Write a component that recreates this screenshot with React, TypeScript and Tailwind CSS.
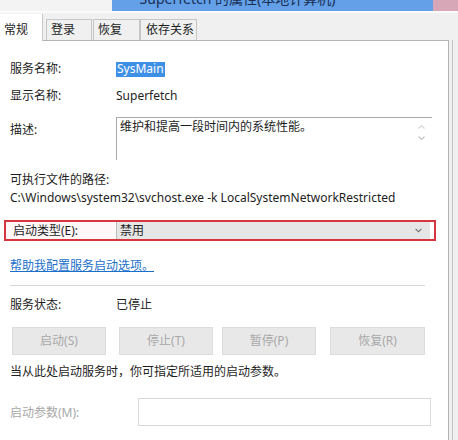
import React from "react";

const font = { fontFamily: '"Segoe UI", "Noto Sans", "Noto Sans CJK SC", sans-serif' };

function Btn({ label, w }: { label: string; w: string }) {
  return (
    <div className={`${w} h-[28px] flex items-center justify-center bg-[#e8e8e8] border border-[#dcdcdc] text-[#a8a8a8] text-[12px]`}>
      {label}
    </div>
  );
}

export default function App() {
  return (
    <div className="w-[458px] h-[440px] overflow-hidden bg-[#f0f0f0] text-[#1e1e1e] text-[12px] flex flex-col" style={font}>
      {/* title bar (cropped) */}
      <div className="h-[11px] flex shrink-0">
        <div className="w-[112px] bg-[#f3f3f3]" />
        <div className="flex-1 bg-[#63a0e8] overflow-hidden flex justify-center">
          <div className="text-[14px] leading-[14px] -mt-[8px] text-[#1a2f55] pr-[70px]">Superfetch 的属性(本地计算机)</div>
        </div>
        <div className="w-[25px] bg-[#d7a7b8]" />
      </div>
      <div className="h-[2px] bg-[#fbfbfb] shrink-0" />
      {/* tabs */}
      <div className="h-[27px] flex items-end shrink-0 relative z-10">
        <div className="w-[43px] h-[27px] bg-white border-r border-[#c9c9c9] -mb-px flex items-start pt-[7px] pl-[4px] text-[12px]">常规</div>
        <div className="ml-[3px] w-[46px] h-[21px] bg-[#f0f0f0] border border-b-0 border-[#c6c6c6] flex items-center pl-[4px]">登录</div>
        <div className="ml-px w-[47px] h-[21px] bg-[#f0f0f0] border border-b-0 border-[#c6c6c6] flex items-center pl-[4px]">恢复</div>
        <div className="w-[57px] h-[21px] bg-[#f0f0f0] border border-b-0 border-[#c6c6c6] flex items-center pl-[5px]">依存关系</div>
      </div>
      {/* panel */}
      <div className="flex-1 flex">
        <div className="w-[449px] bg-white border-t border-r border-[#b4b4b4] flex flex-col">
          <div className="h-[20px]" />
          <div className="h-[16px] flex items-center">
            <div className="w-[116px] pl-[10px]">服务名称:</div>
            <div className="bg-[#3e8fe6] text-white px-[1px] h-[15px] flex items-center">SysMain</div>
          </div>
          <div className="h-[11px]" />
          <div className="h-[16px] flex items-center">
            <div className="w-[116px] pl-[10px]">显示名称:</div>
            <div>Superfetch</div>
          </div>
          <div className="h-[13px]" />
          <div className="h-[43px] flex">
            <div className="w-[116px] pl-[10px] pt-[4px]">描述:</div>
            <div className="w-[316px] border-t border-l border-[#a9a9a9] flex">
              <div className="flex-1 pl-[3px] pt-[1px] leading-[16px]">维护和提高一段时间内的系统性能。</div>
              <div className="w-[14px] mr-[4px] flex flex-col items-center pt-[6px] gap-[7px]">
                <svg width="7" height="5" viewBox="0 0 7 5"><path d="M0.5 4.5 L3.5 1.5 L6.5 4.5" fill="none" stroke="#d4d4d4" strokeWidth="1.2" /></svg>
                <svg width="7" height="5" viewBox="0 0 7 5"><path d="M0.5 0.5 L3.5 3.5 L6.5 0.5" fill="none" stroke="#c4c4c4" strokeWidth="1.2" /></svg>
              </div>
            </div>
          </div>
          <div className="h-[12px]" />
          <div className="h-[16px] flex items-center pl-[10px]">可执行文件的路径:</div>
          <div className="h-[2px]" />
          <div className="h-[16px] flex items-center pl-[10px]">C:\Windows\system32\svchost.exe -k LocalSystemNetworkRestricted</div>
          <div className="h-[14px]" />
          <div className="ml-[4px] w-[432px] h-[21px] border-2 border-[#d8363f] flex items-stretch">
            <div className="w-[110px] pl-[7px] flex items-center bg-[#fff7f8]">启动类型(E):</div>
            <div className="w-[314px] bg-[#e6e6e6] border-l border-[#bdbdbd] flex items-center pl-[3px] pr-[8px]">
              <div className="flex-1">禁用</div>
              <svg width="7" height="5" viewBox="0 0 8 5"><path d="M0.7 0.7 L4 4 L7.3 0.7" fill="none" stroke="#6a6a6a" strokeWidth="1.3" /></svg>
            </div>
          </div>
          <div className="h-[17px]" />
          <div className="h-[16px] flex items-center pl-[10px]">
            <span className="text-[#1a6fc9] underline">帮助我配置服务启动选项。</span>
          </div>
          <div className="h-[11px]" />
          <div className="ml-[10px] w-[415px] h-px bg-[#d6d6d6]" />
          <div className="h-[11px]" />
          <div className="h-[16px] flex items-center">
            <div className="w-[116px] pl-[10px]">服务状态:</div>
            <div>已停止</div>
          </div>
          <div className="h-[14px]" />
          <div className="flex pl-[12px]">
            <Btn label="启动(S)" w="w-[94px]" />
            <div className="w-[13px]" />
            <Btn label="停止(T)" w="w-[94px]" />
            <div className="w-[9px]" />
            <Btn label="暂停(P)" w="w-[94px]" />
            <div className="w-[14px]" />
            <Btn label="恢复(R)" w="w-[95px]" />
          </div>
          <div className="h-[9px]" />
          <div className="h-[16px] flex items-center pl-[10px]">当从此处启动服务时，你可指定所适用的启动参数。</div>
          <div className="h-[18px]" />
          <div className="flex items-center">
            <div className="w-[138px] pl-[10px] text-[#a8a8a8] pt-[2px]">启动参数(M):</div>
            <div className="w-[293px] h-[28px] border border-[#d9d9d9] bg-white" />
          </div>
        </div>
        <div className="w-[3px]" />
        <div className="w-px bg-[#c2c2c2]" />
      </div>
    </div>
  );
}
